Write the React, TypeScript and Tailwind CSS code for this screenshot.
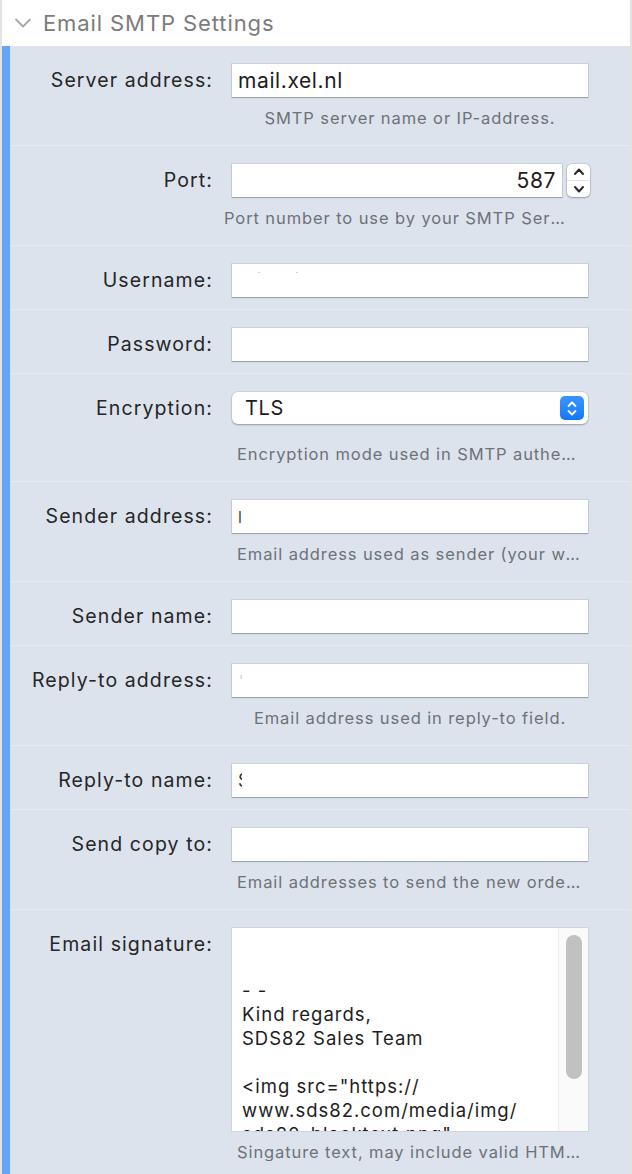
import React from "react";

const font = { fontFamily: "Inter, 'Noto Sans', 'Liberation Sans', sans-serif" };

interface RowProps {
  label: string;
  hint?: string;
  children: React.ReactNode;
  hintWidth?: "full" | "port";
  hintGap?: "normal" | "wide";
  first?: boolean;
  last?: boolean;
}

const Hint = ({ text, port, wide }: { text: string; port?: boolean; wide?: boolean }) => (
  <div className={`ml-[222px] flex justify-center ${port ? "w-[330px]" : "w-[356px]"} ${wide ? "mt-[20px]" : "mt-[12px]"}`}>
    <span className="block w-[346px] shrink-0 truncate text-center text-[16.5px] leading-[18px] tracking-[0.9px] text-[#6e7278]">
      {text}
    </span>
  </div>
);

const Row = ({ label, hint, children, hintWidth = "full", hintGap = "normal", first, last }: RowProps) => (
  <div
    className={`${first ? "" : "border-t border-[#e6eaf1]"} pt-[18px] ${
      last ? "pb-[14px]" : hint ? "pb-[18px]" : "pb-[12px]"
    }`}
  >
    <div className="flex items-start">
      <label className="flex h-[33px] w-[203px] shrink-0 items-center justify-end text-[19.5px] tracking-[1.1px] text-[#262626]">
        {label}
      </label>
      <div className="ml-[19px]">{children}</div>
    </div>
    {hint && <Hint text={hint} port={hintWidth === "port"} wide={hintGap === "wide"} />}
  </div>
);

const TextInput = ({ value, align = "left", width = "full" }: { value?: React.ReactNode; align?: "left" | "right"; width?: "full" | "port" }) => (
  <div
    className={`flex h-[33px] items-center bg-white px-[6px] text-[21px] tracking-[0.6px] text-[#1d1d1d] shadow-[0_0_0_1px_rgba(0,0,0,0.08),0_1px_1px_rgba(0,0,0,0.22)] ${
      width === "port" ? "w-[330px]" : "w-[356px]"
    } ${align === "right" ? "justify-end" : "justify-start"}`}
  >
    {value}
  </div>
);

const Stepper = () => (
  <div className="flex h-[33px] w-[23px] flex-col items-center justify-between rounded-[5px] bg-white py-[3px] shadow-[0_0_0_1px_rgba(0,0,0,0.08),0_1px_2px_rgba(0,0,0,0.25)]">
    <svg width="12" height="9" viewBox="0 0 12 9" fill="none">
      <path d="M2 7 L6 2.5 L10 7" stroke="#2a2a2a" strokeWidth="2" strokeLinecap="round" strokeLinejoin="round" />
    </svg>
    <div className="h-px w-full bg-[#e2e2e2]" />
    <svg width="12" height="9" viewBox="0 0 12 9" fill="none">
      <path d="M2 2 L6 6.5 L10 2" stroke="#2a2a2a" strokeWidth="2" strokeLinecap="round" strokeLinejoin="round" />
    </svg>
  </div>
);

const Select = ({ value }: { value: string }) => (
  <div className="flex h-[32px] w-[356px] items-center justify-between rounded-[6px] bg-white pl-[13px] pr-[4px] text-[20px] tracking-[0.6px] text-[#1d1d1d] shadow-[0_0_0_1px_rgba(0,0,0,0.06),0_1px_2px_rgba(0,0,0,0.28)]">
    <span>{value}</span>
    <div className="flex h-[24px] w-[24px] flex-col items-center justify-center gap-[1px] rounded-[5px] bg-gradient-to-b from-[#3a95fd] to-[#1178f8]">
      <svg width="12" height="8" viewBox="0 0 12 8" fill="none">
        <path d="M2.5 6 L6 2.5 L9.5 6" stroke="white" strokeWidth="1.8" strokeLinecap="round" strokeLinejoin="round" />
      </svg>
      <svg width="12" height="8" viewBox="0 0 12 8" fill="none">
        <path d="M2.5 2 L6 5.5 L9.5 2" stroke="white" strokeWidth="1.8" strokeLinecap="round" strokeLinejoin="round" />
      </svg>
    </div>
  </div>
);

const signature = `

- -
Kind regards,
SDS82 Sales Team

<img src="https://
www.sds82.com/media/img/
sds82_blacktext.png"`;

const SignatureBox = () => (
  <div className="flex h-[203px] w-[356px] overflow-hidden bg-white shadow-[0_0_0_1px_rgba(0,0,0,0.06)]">
    <div className="h-[203px] flex-1 overflow-hidden whitespace-pre-wrap pl-[10px] pt-[2px] text-[18.5px] leading-[24px] tracking-[1px] text-[#1d1d1d]">
      {signature}
    </div>
    <div className="w-[30px] shrink-0 border-l border-[#ececec] bg-[#fafafa] pt-[7px]">
      <div className="mx-auto h-[144px] w-[16px] rounded-full bg-[#c1c1c1]" />
    </div>
  </div>
);

const App = () => {
  return (
    <div style={font} className="flex min-h-[1174px] w-[632px] flex-col border-x-2 border-[#e3e3e3] bg-white">
      {/* Section header */}
      <div className="flex h-[46px] items-center pl-[12px]">
        <svg width="18" height="12" viewBox="0 0 18 12" fill="none">
          <path d="M2 2.5 L9 9.5 L16 2.5" stroke="#a8a8a8" strokeWidth="1.8" strokeLinecap="round" strokeLinejoin="round" />
        </svg>
        <span className="ml-[11px] text-[22px] tracking-[0.9px] text-[#7b7b7b]">Email SMTP Settings</span>
      </div>

      {/* Settings panel */}
      <div className="flex-1 border-l-8 border-[#63a6f9] bg-[#dce3ed]">
        <Row label="Server address:" hint="SMTP server name or IP-address." first>
          <TextInput value="mail.xel.nl" />
        </Row>
        <Row label="Port:" hint="Port number to use by your SMTP Server" hintWidth="port">
          <div className="flex items-center gap-[5px]">
            <TextInput value="587" align="right" width="port" />
            <Stepper />
          </div>
        </Row>
        <Row label="Username:">
          <TextInput
            value={
              <span className="relative h-full w-full">
                <span className="absolute left-[20px] top-[8px] h-[1px] w-[2px] bg-[#d0d0d0]" />
                <span className="absolute left-[58px] top-[8px] h-[1px] w-[2px] bg-[#d0d0d0]" />
              </span>
            }
          />
        </Row>
        <Row label="Password:">
          <TextInput />
        </Row>
        <Row label="Encryption:" hint="Encryption mode used in SMTP authentication" hintGap="wide">
          <Select value="TLS" />
        </Row>
        <Row label="Sender address:" hint="Email address used as sender (your webshop email)">
          <TextInput value={<span className="text-[16px] text-[#444]">l</span>} />
        </Row>
        <Row label="Sender name:">
          <TextInput />
        </Row>
        <Row label="Reply-to address:" hint="Email address used in reply-to field.">
          <TextInput value={<span className="ml-[1px] text-[14px] text-[#cfcfcf]">'</span>} />
        </Row>
        <Row label="Reply-to name:">
          <TextInput value={<span className="inline-block w-[4px] overflow-hidden text-[18px] text-[#333]">S</span>} />
        </Row>
        <Row label="Send copy to:" hint="Email addresses to send the new order notification to">
          <TextInput />
        </Row>
        <Row label="Email signature:" hint="Singature text, may include valid HTML code" last>
          <SignatureBox />
        </Row>
      </div>
    </div>
  );
};

export default App;
